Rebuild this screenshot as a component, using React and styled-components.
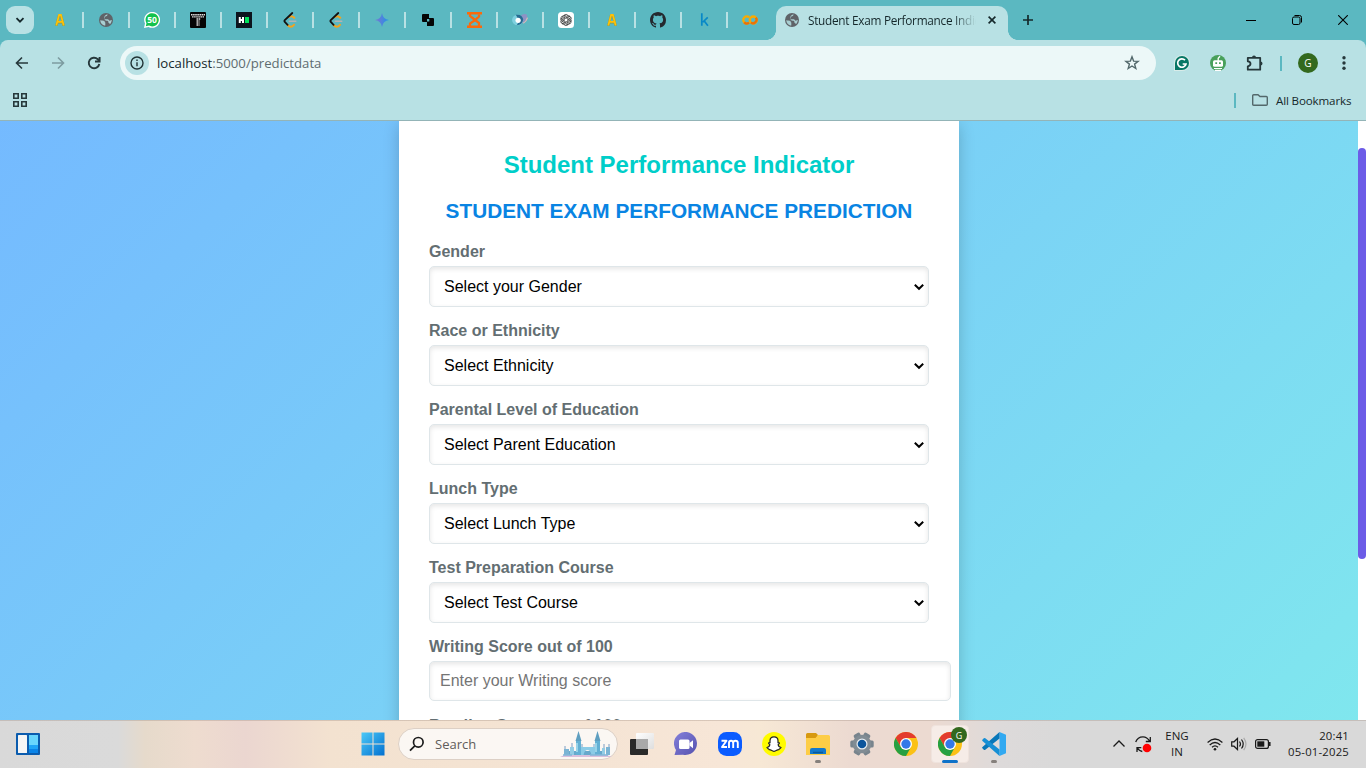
import React from "react";
import styled, { createGlobalStyle } from "styled-components";

const Global = createGlobalStyle`
  * { box-sizing: border-box; }
  html, body { margin: 0; padding: 0; overflow: hidden; }
  svg { display: block; flex: none; }
`;

const Screen = styled.div`
  width: 1366px;
  height: 768px;
  display: flex;
  flex-direction: column;
  overflow: hidden;
  font-family: "Open Sans", "Noto Sans", sans-serif;
`;

/* ---------- browser frame ---------- */
const TabStrip = styled.div`
  height: 40px;
  flex: none;
  display: flex;
  background: #5bb8c1;
  padding-left: 6px;
`;
const TabSearch = styled.div`
  width: 28px;
  height: 28px;
  margin: 6px 4px 0 0;
  border-radius: 9px;
  background: #b8e1e4;
  display: grid;
  place-items: center;
`;
const PinnedTab = styled.div`
  width: 46px;
  height: 40px;
  flex: none;
  display: grid;
  place-items: center;
  background: ${(p) => (p.$last ? "none" : "linear-gradient(#b8e1e4, #b8e1e4) right 12px / 2px 16px no-repeat")};
  & > svg { margin-left: -2px; }
`;
const ActiveTab = styled.div`
  position: relative;
  width: 232px;
  height: 34px;
  margin: 6px 0 0 2px;
  padding: 0 9px 6px 9px;
  display: flex;
  align-items: center;
  background: #b8e1e4;
  border-radius: 10px 10px 0 0;
  &::before, &::after {
    content: "";
    position: absolute;
    bottom: 0;
    width: 10px;
    height: 10px;
  }
  &::before { left: -10px; background: radial-gradient(circle at 0 0, transparent 9.6px, #b8e1e4 10.2px); }
  &::after { right: -10px; background: radial-gradient(circle at 100% 0, transparent 9.6px, #b8e1e4 10.2px); }
`;
const TabTitle = styled.div`
  width: 168px;
  margin-left: 9px;
  overflow: hidden;
  white-space: nowrap;
  font-size: 11.8px;
  line-height: 18px;
  letter-spacing: -0.28px;
  color: #15282b;
  mask-image: linear-gradient(90deg, #000 145px, transparent 168px);
`;
const CloseTab = styled.div`
  margin-left: 12px;
`;
const NewTab = styled.div`
  margin: 14px 0 0 14px;
`;
const WindowButtons = styled.div`
  margin-left: auto;
  display: flex;
  height: 40px;
  align-items: center;
  & > * { width: 46px; display: grid; place-items: center; }
`;
const Toolbar = styled.div`
  height: 46px;
  flex: none;
  display: flex;
  align-items: center;
  background: #5bb8c1;
`;
const ToolbarInner = styled.div`
  flex: 1;
  height: 46px;
  display: flex;
  align-items: center;
  padding-left: 14px;
  border-radius: 8px 8px 0 0;
  background: #b8e1e4;
`;
const NavIcon = styled.div`
  width: 36px;
  display: flex;
`;
const Omnibox = styled.div`
  width: 1036px;
  height: 34px;
  margin-left: -2px;
  padding: 0 16px 0 5px;
  border-radius: 17px;
  background: #ecf8f8;
  display: flex;
  align-items: center;
`;
const SiteInfo = styled.div`
  width: 24px;
  height: 24px;
  border-radius: 12px;
  background: #b8e1e4;
  display: grid;
  place-items: center;
`;
const Url = styled.div`
  flex: 1;
  margin-left: 8px;
  font-size: 13.2px;
  line-height: 18px;
  color: #5e6d70;
  & > span { color: #16292c; }
`;
const Extensions = styled.div`
  display: flex;
  align-items: center;
  margin-left: 18px;
`;
const ExtIcon = styled.div`
  width: ${(p) => p.$w || 36}px;
  display: flex;
`;
const Divider = styled.div`
  width: 2px;
  height: 15px;
  background: #5bb8c1;
  margin-right: ${(p) => p.$gap}px;
`;
const Avatar = styled.div`
  width: 20px;
  height: 20px;
  margin-right: 24px;
  border-radius: 50%;
  background: #33691e;
  color: #fff;
  font-size: 10px;
  display: grid;
  place-items: center;
`;
const Bookmarks = styled.div`
  height: 35px;
  flex: none;
  display: flex;
  align-items: center;
  padding: 0 15px 6px 13px;
  background: #b8e1e4;
  border-bottom: 1px solid #93b4b7;
`;
const Spacer = styled.div`
  flex: 1;
`;
const BookmarkLabel = styled.div`
  width: 75px;
  margin-left: 8px;
  font-size: 11.6px;
  letter-spacing: -0.15px;
  white-space: nowrap;
  color: #15282b;
`;

/* ---------- page ---------- */
const Viewport = styled.div`
  height: 599px;
  flex: none;
  display: flex;
  overflow: hidden;
  font-family: Arial, "Liberation Sans", sans-serif;
`;
const Page = styled.div`
  width: 1358px;
  height: 599px;
  overflow: hidden;
  background: linear-gradient(135deg, #74b9ff, #81ecec) 0 -39px / 1358px 873px no-repeat;
`;
const Card = styled.main`
  width: 560px;
  height: 640px;
  margin: 0 auto;
  padding: 30px;
  background: #fff;
  box-shadow: 0 4px 15px rgba(0, 0, 0, 0.2);
`;
const Title = styled.h1`
  margin: 0;
  text-align: center;
  font-size: 24px;
  line-height: 28px;
  color: #00cec9;
`;
const Subtitle = styled.h2`
  margin: 19px 0 18px;
  text-align: center;
  font-size: 20.8px;
  line-height: 26px;
  white-space: nowrap;
  color: #0984e3;
`;
const Field = styled.div`
  height: 79px;
`;
const Label = styled.label`
  display: block;
  margin-bottom: 5px;
  font-size: 16px;
  line-height: 19px;
  font-weight: bold;
  color: #636e72;
`;
const control = `
  margin: 0;
  border: 1px solid #dfe6e9;
  border-radius: 5px;
  background-color: #fff;
  box-shadow: inset 0 2px 5px rgba(0, 0, 0, 0.1);
  font-family: Arial, "Liberation Sans", sans-serif;
  font-size: 16px;
  outline: none;
`;
const SelectBox = styled.div`
  display: grid;
  grid-template-columns: 1fr 19px;
  align-items: center;
  width: 500px;
  & > * { grid-row: 1; }
  & > svg { grid-column: 2; pointer-events: none; }
`;
const Select = styled.select`
  ${control}
  appearance: none;
  grid-column: 1 / 3;
  width: 500px;
  height: 41px;
  padding: 10px 24px 10px 14px;
  color: #000;
`;
const Input = styled.input`
  ${control}
  display: block;
  padding: 10px;
  width: 522px;
  height: 40px;
  &::placeholder { color: #757575; }
`;
const Scrollbar = styled.div`
  width: 8px;
  padding-top: 27px;
  background: #fff;
`;
const Thumb = styled.div`
  height: 411px;
  border-radius: 5px;
  background: #6c5ce7;
`;

/* ---------- taskbar ---------- */
const Taskbar = styled.div`
  height: 48px;
  flex: none;
  display: flex;
  align-items: center;
  padding-bottom: 1px;
  border-top: 1px solid rgba(160, 140, 130, 0.35);
  background: linear-gradient(90deg, #d9d9d9 0, #dadada 118px, #e6dacb 145px, #eedccf 195px, #ebd6d0 245px, #f3e2d0 330px, #f5e4d4 600px, #f7e6d7 720px, #f7e8d5 760px, #ecdad1 850px, #ecdad1 930px, #dddada 1000px, #d9d9d9 1060px);
`;
const Widgets = styled.div`
  width: 351px;
  padding-left: 16px;
`;
const AppSlot = styled.div`
  position: relative;
  flex: none;
  width: 44px;
  height: 46px;
  display: grid;
  place-items: center;
  &::after {
    content: "";
    position: absolute;
    bottom: 4px;
    left: ${(p) => (p.$state === "active" ? 14 : 19)}px;
    width: ${(p) => (p.$state === "active" ? 16 : 6)}px;
    height: 3px;
    border-radius: 2px;
    background: ${(p) => (p.$state === "active" ? "#0f72c9" : p.$state === "open" ? "#85807c" : "transparent")};
  }
`;
const ActivePlate = styled.div`
  width: 38px;
  height: 38px;
  border-radius: 4px;
  background: #f6ece7;
  border: 1px solid #efe3dd;
  display: grid;
  place-items: center;
`;
const Badge = styled.div`
  position: absolute;
  left: 23px;
  top: 6px;
  width: 16px;
  height: 16px;
  border-radius: 50%;
  background: #33691e;
  color: #fff;
  font-size: 9px;
  z-index: 1;
  display: grid;
  place-items: center;
`;
const SearchBox = styled.div`
  flex: none;
  width: 220px;
  height: 32px;
  margin: 0 2px 0 3px;
  padding: 0 3px 0 10px;
  border: 1px solid #ddd0c5;
  border-radius: 16px;
  background: #fbf7f3;
  display: flex;
  align-items: center;
`;
const SearchText = styled.div`
  flex: 1;
  margin-left: 10px;
  font-size: 13px;
  color: #5f5c5a;
`;
const Tray = styled.div`
  margin-left: auto;
  display: flex;
  align-items: center;
  gap: 8px;
  color: #1a1a1a;
`;
const Language = styled.div`
  width: 34px;
  margin: 0 5px 0 -1px;
  text-align: center;
  font-size: 11.5px;
  line-height: 16px;
`;
const Clock = styled.div`
  width: 65px;
  margin: 0 17px 0 5px;
  text-align: right;
  font-size: 11.3px;
  line-height: 16px;
  letter-spacing: 0.2px;
  white-space: nowrap;
`;

/* ---------- drawings ---------- */
const Stroke = ({ s = 16, w = 1.6, c = "#26383b", d, children, vb = 16, fill = "none" }) => (
  <svg width={s} height={s} viewBox={`0 0 ${vb} ${vb}`} fill={fill} stroke={c} strokeWidth={w}>
    {d && <path d={d} />}
    {children}
  </svg>
);
const Globe = () => (
  <svg width="14" height="14" viewBox="2 2 20 20" fill="#5f6368">
    <circle cx="12" cy="12" r="10" />
    <path fill="#a9cfd2" d="M4 12c1.500 1 4 .8 5.500 1 .8.600.5 2 1.500 2.700V20c-4-.3-7.500-4-7-8zM14 3.800c.2 1.500-.3 2.700-2 3-1.500 0-1 1.500-2 2.200-1 .5-1 2 .5 2h4c1.500.3 1.300 2 3 2 1.200 0 1.500-1 2.700-1 0 2-1 4.500-2.500 6-.5-1.600-2-1.400-2.200-2.500.2-2-1-2.500-2.500-2.500-2 0-3-1-3-2.500C9 8.500 9.500 5 14 3.800z" />
  </svg>
);
const LetterA = () => (
  <svg width="10" height="12" viewBox="0 0 10 12" fill="none">
    <path d="M1.300 11.800 4.100 1.400h1.800L8.700 11.800M3 8.200h4" stroke="#8b9a45" strokeWidth="2.500" />
    <path d="M1.300 11.400 4.100 1h1.800l2.800 10.400M3 7.800h4" stroke="#ffc107" strokeWidth="1.800" />
  </svg>
);
const WhatsApp = () => (
  <svg width="16" height="16" viewBox="0 0 16 16">
    <path d="M0 16l1-4.500A8 8 0 1 1 4.500 15z" fill="#fff" />
    <path d="M1.800 14.200l.7-3A6.600 6.600 0 1 1 5 13.600z" fill="#13c24e" />
    <text x="8" y="11.200" textAnchor="middle" fontSize="8.500" fontWeight="bold" fill="#fff">50</text>
  </svg>
);
const PixelT = () => (
  <svg width="16" height="16" viewBox="0 0 16 16">
    <rect width="16" height="16" rx="1" fill="#050505" />
    <path d="M1 2.800h14M2 4.900h12M6.500 7h4M6.500 9h3M6.500 11h3M6.500 13h3" stroke="#dedede" strokeWidth="1.400" strokeDasharray="1.600 .5" />
  </svg>
);
const HackerRank = () => (
  <svg width="16" height="16" viewBox="0 0 16 16">
    <rect width="16" height="16" fill="#0d141e" />
    <path d="M3.800 5v6M7 5v6M3.800 8H7" stroke="#fff" strokeWidth="2" />
    <rect x="9" y="5" width="4" height="6" fill="#00e35b" />
  </svg>
);
const LeetCode = () => (
  <svg width="14" height="16" viewBox="0 0 14 16" fill="none" strokeLinecap="round">
    <path d="M6 5Q8.500 3 11.300 5.800M4.500 13q3.300 3.500 6.500-.2" stroke="#f5a21b" strokeWidth="2" />
    <path d="M9.300 1 1.800 8Q1 9 1.800 10L4.600 12.800" stroke="#111" strokeWidth="1.800" />
    <path d="M6.300 9.200h6.500" stroke="#b3b3b3" strokeWidth="1.500" />
  </svg>
);
const Gemini = () => (
  <svg width="14" height="14" viewBox="0 0 14 14">
    <defs><linearGradient id="gm"><stop stopColor="#7b75d2" /><stop offset="1" stopColor="#1f93e8" /></linearGradient></defs>
    <path d="M7 0Q7.900 6.100 14 7 7.900 7.900 7 14 6.100 7.900 0 7 6.100 6.100 7 0z" fill="url(#gm)" />
  </svg>
);
const Squares = () => (
  <svg width="12" height="12" viewBox="0 0 12 12">
    <path d="M0 1q0-1 1-1h6v4h4q1 0 1 1v6q0 1-1 1H5V8H1Q0 8 0 7zM5 5v2.500h2.300V5z" fill="#050505" fillRule="evenodd" />
  </svg>
);
const Hourglass = () => (
  <svg width="15" height="16" viewBox="0 0 15 16" fill="none" stroke="#fb6a0b">
    <path d="M0 1.300h15M0 14.700h15" strokeWidth="2.600" />
    <path d="M3 2v2L7.500 7.500 12 11v3M12 2.500v2L7.500 8.500 3 11.500V14" strokeWidth="2.300" />
  </svg>
);
const Planet = () => (
  <svg width="16" height="14" viewBox="0 0 17 15">
    <path d="M9 3Q13-.5 16 2q1 5-5 9z" fill="#8d92c4" />
    <path d="M12 11q3.500-2 4.500-6" stroke="#dcb7b8" fill="none" strokeWidth="1.300" />
    <ellipse cx="6" cy="7.500" rx="6" ry="5.500" fill="#7fd0df" />
    <path d="M4 2q7-1 8 5-1 6-7 6 4-4-1-11z" fill="#276b91" />
    <circle cx="6.500" cy="7.800" r="2.800" fill="#fff" />
  </svg>
);
const Knot = () => (
  <svg width="16" height="16" viewBox="0 0 16 16" fill="none">
    <rect width="16" height="16" rx="3.500" fill="#fff" />
    {[0, 60, 120, 180, 240, 300].map((a) => (
      <path key={a} transform={`rotate(${a} 8 8)`} d="M6.200 8.700V4.500A2 2 0 0 1 9.900 3.400M6.200 5.500 9.600 3.600A2 2 0 0 1 12 5.500" stroke="#222" strokeWidth=".7" />
    ))}
  </svg>
);
const GitHub = () => (
  <svg width="16" height="16" viewBox="0 0 16 16" fill="#24292f">
    <path d="M8 0C3.580 0 0 3.580 0 8c0 3.540 2.290 6.530 5.470 7.590.4.070.55-.17.55-.38 0-.19-.01-.82-.01-1.490-2.010.37-2.530-.49-2.690-.94-.09-.23-.48-.94-.82-1.130-.28-.15-.68-.52-.01-.53.63-.01 1.080.58 1.230.82.72 1.210 1.870.87 2.330.66.07-.52.28-.87.51-1.070-1.780-.2-3.640-.89-3.640-3.950 0-.87.31-1.590.82-2.150-.08-.2-.36-1.020.08-2.120 0 0 .67-.21 2.200.82.64-.18 1.320-.27 2-.27s1.360.09 2 .27c1.530-1.040 2.200-.82 2.200-.82.44 1.100.16 1.920.08 2.120.51.56.82 1.270.82 2.150 0 3.070-1.870 3.750-3.650 3.950.29.25.54.73.54 1.480 0 1.070-.01 1.930-.01 2.200 0 .21.15.46.55.38A8.010 8.010 0 0 0 16 8c0-4.420-3.580-8-8-8z" />
  </svg>
);
const Kaggle = () => (
  <svg width="9" height="14" viewBox="0 0 10 15" fill="none" stroke="#0788c7" strokeWidth="1.900">
    <path d="M2 0v14M8.600 4.500 3 10M4.500 8.300 8.800 14" />
  </svg>
);
const Colab = () => (
  <svg width="16" height="10" viewBox="0 0 16 10" fill="none" strokeWidth="2.300">
    <circle cx="11.300" cy="5" r="3.500" stroke="#f9ab00" />
    <path d="M7.200 2.500A3.500 3.500 0 1 0 7.200 7.500" stroke="#f9ab00" />
    <path d="M2.200 7.400A3.500 3.500 0 0 0 7 7.600M8.900 7.500A3.500 3.500 0 0 0 13.800 2.600" stroke="#e8710a" />
  </svg>
);
const Puzzle = () => (
  <svg width="18" height="18" viewBox="0 0 18 18">
    <path d="M1.800 3.800H14.200V15.700H1.800V12.300Q4.500 12 4.500 9.800T1.800 7.300z" fill="none" stroke="#26383b" strokeWidth="1.800" strokeLinejoin="round" />
    <path d="M6 3.500a2 2 0 0 1 4 0zM14.500 7.600a2 2 0 0 1 0 4z" fill="#26383b" />
  </svg>
);
const Chrome = () => (
  <svg width="24" height="24" viewBox="0 0 24 24">
    <circle cx="12" cy="12" r="12" fill="#fbc116" />
    <path d="M12 12 6.800 15 1.600 6A12 12 0 0 1 22.400 6H12z" fill="#e33b2e" />
    <path d="M1.600 6 6.800 15 12 18l4.700-2.500L12 24A12 12 0 0 1 1.600 6z" fill="#26a042" />
    <circle cx="12" cy="12" r="6" fill="#fff" />
    <circle cx="12" cy="12" r="4.700" fill="#3479e8" />
  </svg>
);
const WidgetsIcon = () => (
  <svg width="24" height="22" viewBox="0 0 24 22">
    <rect width="24" height="22" rx="1" fill="#0b5cae" />
    <rect x="2" y="2" width="9" height="18" rx=".5" fill="#f5f5f5" />
    <rect x="13" y="2" width="9" height="10" fill="#68d6fd" />
    <rect x="13" y="12" width="9" height="4" fill="#1fa5f7" />
    <rect x="13" y="16" width="9" height="4" fill="#0a84e8" />
  </svg>
);
const WindowsLogo = () => (
  <svg width="24" height="24" viewBox="0 0 24 24">
    <defs><linearGradient id="wl" x2="1" y2="1"><stop stopColor="#4cc9f7" /><stop offset="1" stopColor="#0270d0" /></linearGradient></defs>
    <path d="M.5.500h11v11H.5zM12.500.500h11v11h-11zM.5 12.500h11v11H.5zM12.500 12.500h11v11h-11z" fill="url(#wl)" />
  </svg>
);
const Castle = () => (
  <svg width="54" height="28" viewBox="0 0 54 28">
    <path d="M0 27Q10 22 27 23q17 0 25 4z" fill="#d9bfdc" />
    <path d="M4 19h5v6H4zM46 17h4v8h-4z" fill="#7bb4d4" />
    <path d="M9 21h36v4H9z" fill="#68a9cc" />
    <path d="M16 11h5v14h-5zM35 11h5v14h-5z" fill="#62b0d4" />
    <path d="M15.500 11 18.500 1l3 10zM34.500 11l3-10 3 10z" fill="#5f9fc0" />
    <path d="M21 17h14v8h-3.500q-1-5-4-5t-4 5H21z" fill="#8acbe6" />
    <path d="M10 17h4v8h-4zM42 18h3v7h-3z" fill="#93cde5" />
    <path d="M5 19v-3M12 17v-4M44 18v-4M49 17v-3M22 17v-3M34 17v-3" stroke="#7d9ec4" />
    <path d="M17 13v9M36 13v9" stroke="#b5e5f3" strokeWidth="1.300" />
    <path d="M3 25h9M30 25h18" stroke="#83b7d7" strokeWidth="1.500" />
  </svg>
);
const TaskView = () => (
  <svg width="24" height="24" viewBox="0 0 24 24">
    <defs><linearGradient id="tv" x2="1" y2="1"><stop stopColor="#fff" /><stop offset="1" stopColor="#dedede" /></linearGradient></defs>
    <rect y="7" width="18" height="16" rx="1" fill="#2a2a2a" />
    <rect x="6" y="1" width="18" height="16" rx="1" fill="url(#tv)" />
    <rect x="6" y="7" width="12" height="10" fill="#a9a9a9" />
  </svg>
);
const ChatIcon = () => (
  <svg width="24" height="24" viewBox="0 0 24 24">
    <defs><linearGradient id="ch" x2="1" y2="1"><stop stopColor="#8580da" /><stop offset="1" stopColor="#5552af" /></linearGradient></defs>
    <path d="M.5 23l1.500-5A11.500 11.500 0 1 1 9 22.700z" fill="url(#ch)" />
    <rect x="5" y="7.500" width="10.500" height="9.500" rx="1.500" fill="#fff" />
    <path d="M15.500 11l3.500-2.800v8l-3.500-2.800z" fill="#fff" />
  </svg>
);
const Zoom = () => (
  <svg width="24" height="24" viewBox="0 0 24 24">
    <rect width="24" height="24" rx="8.500" fill="#0b5cff" />
    <g fill="none" stroke="#fff" strokeWidth="1.900" strokeLinejoin="round">
      <path d="M3.500 8.800h5L4 15h5M11 16V11q0-2.300 2.100-2.300T15.200 11v5M15.200 11q0-2.300 2.300-2.300T19.800 11v5" />
    </g>
  </svg>
);
const Snapchat = () => (
  <svg width="24" height="24" viewBox="0 0 24 24">
    <circle cx="12" cy="12" r="12" fill="#fffb00" />
    <path d="M12 4.800c-2.500 0-4 1.700-4 4v1.800c-.8.100-1.600 0-1.400.8.200.6 1.200.6 1.200 1.100 0 1.200-1.300 2.500-2.800 3 .2 1.200 1.900 1.100 2.200 2.100 1.500-.4 2.600 1.700 4.800 1.700s3.300-2.100 4.800-1.700c.3-1 2-.9 2.200-2.100-1.500-.5-2.800-1.800-2.800-3 0-.5 1-.5 1.200-1.100.2-.8-.6-.7-1.400-.8V8.800c0-2.300-1.500-4-4-4z" fill="#fff" stroke="#222" strokeWidth="1.200" />
  </svg>
);
const Explorer = () => (
  <svg width="24" height="22" viewBox="0 0 24 22">
    <path d="M0 1.500Q0 0 1.500 0H10l2 2-2 4H0z" fill="#d79910" />
    <path d="M0 5h9.500L12 2H22.500Q24 2 24 3.500V22H0z" fill="#fdcd46" />
    <path d="M4 21v-4q0-2 2-2h12q2 0 2 2v4z" fill="#1379cc" />
    <path d="M7 19.500h10" stroke="#0b5a9b" strokeWidth="1.500" />
  </svg>
);
const Settings = () => (
  <svg width="24" height="24" viewBox="0 0 24 24">
    {[30, 90, 150].map((a) => <rect key={a} x="8.500" y=".3" width="7" height="23.400" rx="1.500" fill="#78848d" transform={`rotate(${a} 12 12)`} />)}
    <circle cx="12" cy="12" r="9.300" fill="#818c94" />
    <circle cx="12" cy="12" r="5.500" fill="#e9eef2" />
    <circle cx="12" cy="12" r="4.300" fill="#0b559c" />
  </svg>
);
const Code = () => (
  <svg width="24" height="24" viewBox="0 0 24 24">
    <path d="M17.500 0 24 2.800v18.400L17.500 24z" fill="#32a9f1" />
    <path d="M17.500 0v6.500L3.300 17.800Q2.500 18.300 1.800 17.700L.4 16.300q-.6-.7.100-1.300z" fill="#0877b9" />
    <path d="M17.500 24v-6.500L3.300 6.200Q2.500 5.700 1.800 6.300L.4 7.700Q-.2 8.400.5 9z" fill="#168fd5" />
  </svg>
);
const Grammarly = () => (
  <svg width="16" height="16" viewBox="0 0 16 16" fill="none">
    <path d="M0 16V8A8 8 0 1 1 8 16z" fill="#d9ece9" />
    <path d="M1 15V8A7 7 0 1 1 8 15z" fill="#087765" />
    <path d="M11 5.200A4.200 4.200 0 1 0 12 9H8.700" stroke="#fff" strokeWidth="1.700" />
  </svg>
);
const Robot = () => (
  <svg width="16" height="16" viewBox="0 0 16 16">
    <circle cx="8" cy="8" r="8" fill="#48a05b" />
    <path d="M8.200 6V3.200L10 1.200" stroke="#fff" strokeWidth="1.300" fill="none" />
    <rect x="3" y="5.300" width="10" height="6.500" rx="1.500" fill="#fff" />
    <path d="M5.300 7.200h1.800v1.800H5.300zM9 7.200h1.800v1.800H9z" fill="#48a05b" />
    <path d="M4 13.500h8M5 15.300h6" stroke="#fff" strokeWidth="1.200" />
  </svg>
);
const MoreDots = () => (
  <svg width="4" height="16" viewBox="0 0 4 16" fill="#26383b">
    <circle cx="2" cy="2.700" r="1.700" /><circle cx="2" cy="8" r="1.700" /><circle cx="2" cy="13.300" r="1.700" />
  </svg>
);

const pinned = [LetterA, Globe, WhatsApp, PixelT, HackerRank, LeetCode, LeetCode, Gemini, Squares, Hourglass, Planet, Knot, LetterA, GitHub, Kaggle, Colab];
const selects = [
  ["Gender", "Select your Gender"],
  ["Race or Ethnicity", "Select Ethnicity"],
  ["Parental Level of Education", "Select Parent Education"],
  ["Lunch Type", "Select Lunch Type"],
  ["Test Preparation Course", "Select Test Course"],
];
const apps = [[TaskView], [ChatIcon], [Zoom], [Snapchat], [Explorer, "open"], [Settings], [Chrome], [Chrome, "active"], [Code, "open"]];

function BrowserFrame() {
  return (
    <>
      <TabStrip>
        <TabSearch><Stroke s={10} vb={10} w={1.8} c="#15282b" d="M1.500 3.200 5 6.700l3.500-3.500" /></TabSearch>
        {pinned.map((Icon, i) => <PinnedTab key={i} $last={i === pinned.length - 1}><Icon /></PinnedTab>)}
        <ActiveTab>
          <Globe />
          <TabTitle>Student Exam Performance Indicator</TabTitle>
          <CloseTab><Stroke s={8} vb={8} w={1.6} c="#15282b" d="M.6.600l6.800 6.800M7.400.600.6 7.400" /></CloseTab>
        </ActiveTab>
        <NewTab><Stroke s={12} vb={12} w={1.7} c="#15282b" d="M6 1v10M1 6h10" /></NewTab>
        <WindowButtons>
          <div><Stroke s={10} vb={10} w={1} c="#000" d="M0 5.500h10" /></div>
          <div><Stroke s={10} vb={10} w={1} c="#000"><rect x=".5" y="2" width="7.500" height="7.500" rx="1.500" /><path d="M2.500.5H7.500Q9.500.5 9.500 2.500V7.500" /></Stroke></div>
          <div><Stroke s={10} vb={10} w={1.1} c="#000" d="M.2.200l9.600 9.600M9.800.200.2 9.800" /></div>
        </WindowButtons>
      </TabStrip>
      <Toolbar>
        <ToolbarInner>
          <NavIcon><Stroke d="M14 8H2.800M8 2.500 2.500 8 8 13.500" /></NavIcon>
          <NavIcon><Stroke c="#7d9ca0" d="M2 8h11.200M8 2.500 13.500 8 8 13.500" /></NavIcon>
          <NavIcon><Stroke w={1.9} d="M13.300 9A5.300 5.300 0 1 1 11.800 4.200L13.500 6M13.600 2v4.500H9" /></NavIcon>
          <Omnibox>
            <SiteInfo><Stroke s={14} vb={14} w={1.4} c="#213335"><circle cx="7" cy="7" r="6" /><path d="M7 6.200v4M7 3.500v1.500" /></Stroke></SiteInfo>
            <Url><span>localhost</span>:5000/predictdata</Url>
            <Stroke w={1.4} c="#52686b" d="M8 1.800 9.600 6.100l4.500.2-3.500 2.800 1.200 4.400L8 11l-3.800 2.500 1.200-4.400-3.500-2.800 4.500-.2z" />
          </Omnibox>
          <Extensions>
            <ExtIcon><Grammarly /></ExtIcon>
            <ExtIcon><Robot /></ExtIcon>
            <ExtIcon $w={34}><Puzzle /></ExtIcon>
            <Divider $gap={16} />
            <Avatar>G</Avatar>
            <MoreDots />
          </Extensions>
        </ToolbarInner>
      </Toolbar>
      <Bookmarks>
        <Stroke s={14} vb={14} w={1.600}><path d="M.8.800h4.400v4.400H.8zM8.800.800h4.400v4.400H8.800zM.8 8.800h4.400v4.400H.8zM8.800 8.800h4.400v4.400H8.800z" /></Stroke>
        <Spacer />
        <Divider $gap={16} />
        <svg width="16" height="12" viewBox="0 0 16 12" fill="none" stroke="#53686b" strokeWidth="1.400"><path d="M.7 1.700q0-1 1-1H6L8 2.500h6.300q1 0 1 1v6.800q0 1-1 1H1.700q-1 0-1-1z" /></svg>
        <BookmarkLabel>All Bookmarks</BookmarkLabel>
      </Bookmarks>
    </>
  );
}

function PredictionForm() {
  return (
    <Viewport>
      <Page>
        <Card>
          <Title>Student Performance Indicator</Title>
          <Subtitle>STUDENT EXAM PERFORMANCE PREDICTION</Subtitle>
          {selects.map(([label, option]) => (
            <Field key={label}>
              <Label>{label}</Label>
              <SelectBox>
                <Select defaultValue={option}><option>{option}</option></Select>
                <svg width="18" height="8" viewBox="0 0 18 8" fill="none" stroke="#000" strokeWidth="2"><path d="M4.800 1.800 9 5.800l4.200-4" /></svg>
              </SelectBox>
            </Field>
          ))}
          <Field><Label>Writing Score out of 100</Label><Input placeholder="Enter your Writing score" /></Field>
          <Field><Label>Reading Score out of 100</Label></Field>
        </Card>
      </Page>
      <Scrollbar><Thumb /></Scrollbar>
    </Viewport>
  );
}

function WindowsTaskbar() {
  return (
    <Taskbar>
      <Widgets><WidgetsIcon /></Widgets>
      <AppSlot><WindowsLogo /></AppSlot>
      <SearchBox>
        <Stroke w={1.700} c="#1b1b1b"><circle cx="9.300" cy="6.300" r="4.800" /><path d="M5.800 9.800 1 14.700" /></Stroke>
        <SearchText>Search</SearchText>
        <Castle />
      </SearchBox>
      {apps.map(([Icon, state], i) => (
        <AppSlot key={i} $state={state}>
          {state === "active" ? <><ActivePlate><Icon /></ActivePlate><Badge>G</Badge></> : <Icon />}
        </AppSlot>
      ))}
      <Tray>
        <Stroke s={12} vb={12} w={1.300} c="#1a1a1a" d="M.5 8.500 6 3l5.500 5.500" />
        <svg width="20" height="18" viewBox="-2 0 20 18" fill="none" stroke="#1a1a1a" strokeWidth="1.300">
          <path d="M.7 7Q2.500 1.800 8 1.800q4 0 6.800 4.500M15.300 2v4.500h-4.500M2 17v-4.300h4.300M2.300 13.200q2 2.800 5 3.300" />
          <circle cx="12" cy="13" r="4.300" fill="#f00" stroke="none" />
        </svg>
        <Language>ENG<br />IN</Language>
        <svg width="16" height="13" viewBox="0 0 16 13" fill="none" stroke="#1a1a1a" strokeWidth="1.200">
          <path d="M.6 4.500q7.400-7 14.800 0M2.700 7q5.300-5 10.600 0M5 9.300q3-2.800 6 0" /><circle cx="8" cy="11.200" r="1.300" fill="#1a1a1a" stroke="none" />
        </svg>
        <svg width="16" height="14" viewBox="0 0 16 14" fill="none" stroke="#1a1a1a" strokeWidth="1.200">
          <path d="M.7 4.800H3L6.500 1.500v11L3 9.200H.7zM8.500 4.500q2 2.500 0 5M10.500 2.500q3.400 4.500 0 9" /><path d="M12.700.8q4.500 6.200 0 12.400" stroke="#aaa" />
        </svg>
        <svg width="16" height="10" viewBox="0 0 16 10" fill="none" stroke="#1a1a1a" strokeWidth="1.200">
          <rect x=".6" y=".6" width="12.800" height="8.800" rx="2" /><rect x="2.300" y="2.300" width="7" height="5.400" fill="#1a1a1a" stroke="none" /><path d="M14.800 3v4" strokeWidth="1.500" />
        </svg>
        <Clock>20:41<br />05-01-2025</Clock>
      </Tray>
    </Taskbar>
  );
}

export default function App() {
  return (
    <Screen>
      <Global />
      <BrowserFrame />
      <PredictionForm />
      <WindowsTaskbar />
    </Screen>
  );
}
